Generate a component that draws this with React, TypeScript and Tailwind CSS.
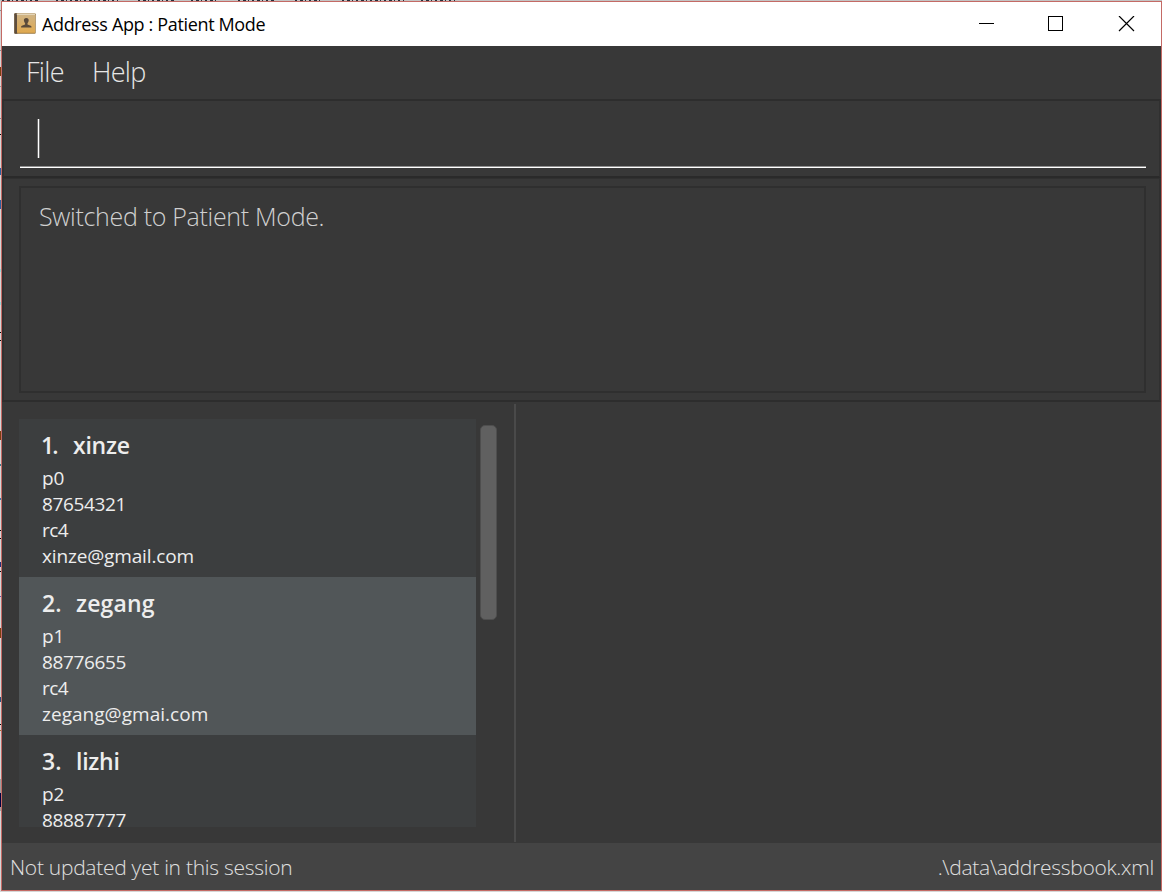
import React from "react";

type Patient = { name: string; id: string; phone: string; address?: string; email?: string };

const patients: Patient[] = [
  { name: "xinze", id: "p0", phone: "87654321", address: "rc4", email: "xinze@gmail.com" },
  { name: "zegang", id: "p1", phone: "88776655", address: "rc4", email: "zegang@gmai.com" },
  { name: "lizhi", id: "p2", phone: "88887777" },
];

// Sliver of the window behind, visible along the left edge: [y, height, colour]
const edgeMarks: [number, number, string][] = [
  [10, 1, "#8a8a8a"], [50, 1, "#8a8a8a"], [67, 9, "#7a3d10"], [86, 1, "#9a9a9a"],
  [118, 1, "#8a8a8a"], [134, 1, "#000000"], [168, 7, "#2b5f9e"], [200, 9, "#2b5f9e"],
  [269, 3, "#9adada"], [302, 3, "#9adada"], [332, 1, "#000000"], [340, 1, "#000000"],
  [431, 9, "#7a3d10"], [464, 2, "#3a7a8a"], [498, 2, "#3a7aa8"], [530, 1, "#000000"],
  [538, 1, "#000000"], [562, 5, "#25307a"], [571, 1, "#000000"], [596, 1, "#6a50a8"],
  [628, 10, "#7a3d10"], [697, 5, "#25507a"], [724, 1, "#000000"], [730, 1, "#a06a30"],
  [779, 14, "#a0a0a0"], [793, 14, "#000040"], [807, 4, "#a0a0a0"],
];

function Backdrop() {
  return (
    <svg className="absolute left-0 top-0" width="1162" height="892" shapeRendering="crispEdges">
      <rect width="1162" height="1" fill="#c4c4c4" />
      {edgeMarks.map(([y, h, c]) => (
        <rect key={y} x="0" y={y} width="1" height={h} fill={c} />
      ))}
      <g stroke="#26303c" strokeDasharray="2 3 3 2 1 3">
        <path d="M2 .5h38M56 .5h62M138 .5h38M191 .5h28M238 .5h38M295 .5h26M342 .5h62M421 .5h34" />
      </g>
    </svg>
  );
}

function BookIcon() {
  return (
    <svg width="22" height="22" viewBox="0 0 22 22" className="shrink-0">
      <defs>
        <linearGradient id="cover" x1="0" y1="0" x2="0" y2="1">
          <stop offset="0" stopColor="#cfb384" />
          <stop offset="1" stopColor="#e0a94f" />
        </linearGradient>
      </defs>
      <rect x="0.3" y="0.3" width="21.400" height="20.400" rx="1" fill="#9a7840" />
      <rect x="0.3" y="0.3" width="3.200" height="20.400" rx="0.8" fill="#5d4d3e" />
      <rect x="2.800" y="0.600" width="18.200" height="1.300" fill="#efe4cd" />
      <rect x="3" y="1.900" width="18" height="17.900" fill="url(#cover)" />
      <path d="M12.300 4.900c1.700 0 2.500 1.100 2.400 2.600-.1 1.200-.6 2.100-1.200 2.700v1.300l3.200 1.200c.6.2.8.7.8 1.900H7.100c0-1.200.2-1.700.8-1.900l3.200-1.200v-1.300c-.6-.6-1.100-1.500-1.200-2.700-.1-1.500.7-2.600 2.400-2.600z" fill="#5a4a3a" />
    </svg>
  );
}

function TitleBar() {
  return (
    <div className="flex h-11 shrink-0 items-center bg-white pl-[12px] pr-[26px] text-black">
      <BookIcon />
      <span className="ml-[6px] flex-1 text-[18px] tracking-[-0.35px]">Address App : Patient Mode</span>
      <svg width="157" height="16" viewBox="0 0 157 16" fill="none" stroke="#000">
        <path d="M1 7.500h15" />
        <rect x="70.500" y="0.500" width="14" height="14" />
        <path d="M141 0l15 15M156 0l-15 15" strokeWidth="1.200" />
      </svg>
    </div>
  );
}

function PatientCard({ index, patient }: { index: number; patient: Patient }) {
  return (
    <div className={`h-[158px] shrink-0 pl-[23px] pt-3 text-[19px] leading-[26px] text-[#ededed] ${index === 2 ? "bg-[#515658]" : "bg-[#3c3e3f]"}`}>
      <div className="mb-[6px] flex h-7 text-[23px] font-semibold leading-7">
        <span className={index === 1 ? "-ml-px w-[32px] tracking-[-2px]" : "w-[34px]"}>{index}.</span>
        <span className={index === 2 ? "tracking-[0.15px]" : "tracking-[-0.25px]"}>{patient.name}</span>
      </div>
      <div>{patient.id}</div>
      <div className="tracking-[-0.35px]">{patient.phone}</div>
      {patient.address && <div className="tracking-[-0.5px]">{patient.address}</div>}
      {patient.email && <div className={index === 1 ? "tracking-[-0.15px]" : "tracking-[0.03px]"}>{patient.email}</div>}
    </div>
  );
}

export default function App() {
  return (
    <div className="relative h-[892px] w-[1162px] overflow-hidden bg-[#d6d6d6] pl-px pt-px font-['Open_Sans',sans-serif]">
      <Backdrop />
      <div className="relative flex h-[890px] flex-col border border-[#c46a65] bg-[#383838]">
        <TitleBar />
        <div className="flex h-[53px] shrink-0 pl-[24px] pt-[6px] text-[27px] font-light leading-[40px] tracking-[-0.7px] text-[#e6e6e6]">
          <span className="w-[66px]">File</span>
          <span>Help</span>
        </div>
        <div className="h-[79px] shrink-0 border-2 border-[#303030] border-t-[#2d2d2d] border-b-[#2a2a2a] pl-[16px] pr-[13px] pt-[18px]">
          <div className="h-[49px] border-b border-white">
            <div className="h-12 border-b border-[#8f8f8f] pl-[17px]">
              <div className="h-[39px] w-[3px] border-x border-[#6b6b6b] bg-white" />
            </div>
          </div>
        </div>
        <div className="h-[224px] shrink-0 border-2 border-t border-[#303030] border-b-[#2d2d2d] pl-[15px] pr-[13px] pt-[7px]">
          <div className="h-[207px] border-2 border-[#2f2f2f] pl-[18px] pt-[10px] text-[25px] font-light leading-[36px] tracking-[-0.31px] text-[#d0d0d0]">
            Switched to Patient Mode.
          </div>
        </div>
        <div className="flex h-[441px] shrink-0 pl-[17px]">
          <div className="mt-[17px] flex h-[408px] w-[457px] flex-col overflow-hidden">
            {patients.map((p, i) => (
              <PatientCard key={p.id} index={i + 1} patient={p} />
            ))}
          </div>
          <div className="ml-[4px] mt-[23px] h-[195px] w-[17px] rounded-[5px] border border-[#4e4e4e] bg-[#606060]" />
          <div className="ml-[17px] mt-[2px] h-[438px] w-[2px] bg-[#4a4a4a]" />
        </div>
        <div className="flex flex-1 items-center justify-between bg-[#444444] pl-2 pr-[7px] pt-[2px] text-[21px] font-light tracking-[-0.28px] text-[#e0e0e0]">
          <span>Not updated yet in this session</span>
          <span>.\data\addressbook.xml</span>
        </div>
      </div>
    </div>
  );
}
